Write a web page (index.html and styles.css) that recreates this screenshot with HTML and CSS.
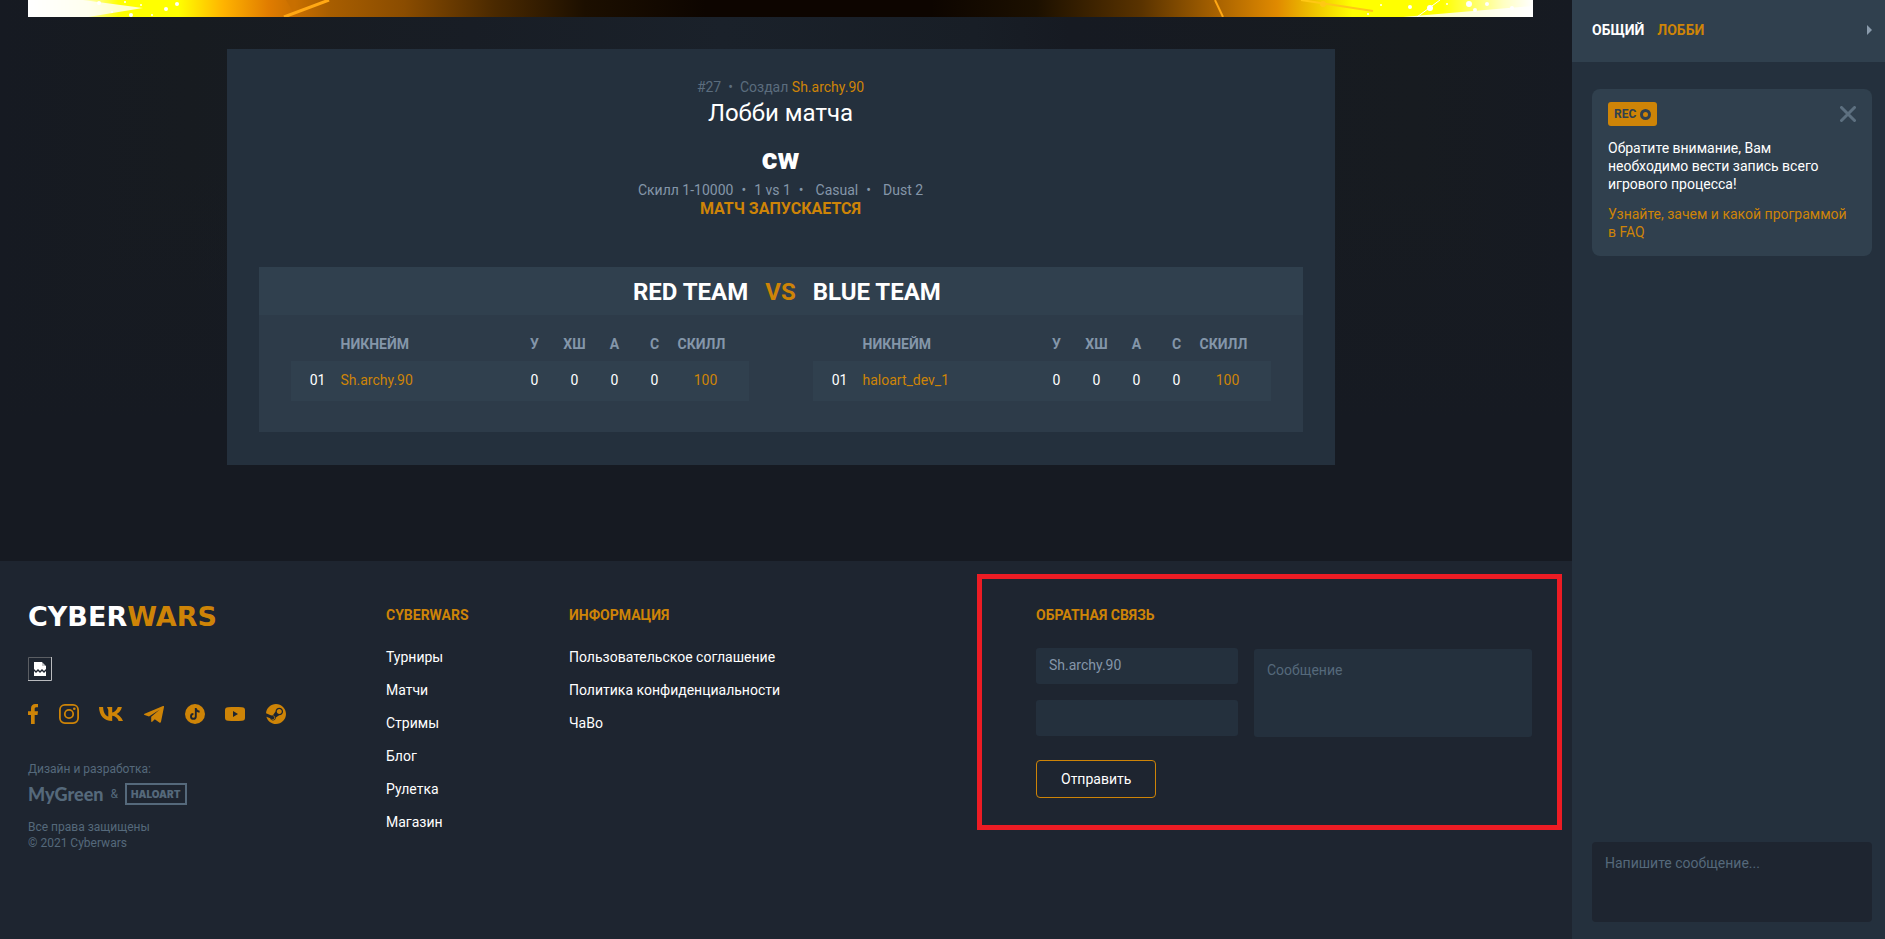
FILE: index.html
```html
<!DOCTYPE html>
<html lang="ru">
<head>
<meta charset="utf-8">
<meta name="viewport" content="width=device-width, initial-scale=1">
<title>Cyberwars</title>
<link rel="stylesheet" href="styles.css">
</head>
<body>
<div class="page">
  <div class="content">
    <main class="main">
      <div class="banner">
        <svg class="banner-left" width="400" height="17" viewBox="0 0 400 17" aria-hidden="true">
          <path d="M0 0H55L115 8L60 17H0z" fill="#fff" opacity=".8"/>
          <path d="M258 0h8v13z" fill="#c86f00"/>
          <path d="M301 0L256 17" stroke="#ffa814" stroke-width="3"/>
          <g fill="#fff"><circle cx="71" cy="3" r="2"/><circle cx="84" cy="12" r="1"/><circle cx="97" cy="2" r="1"/><circle cx="103" cy="15" r="2"/><circle cx="113" cy="5" r="1"/><circle cx="138" cy="9" r="2"/><circle cx="149" cy="4" r="2"/><circle cx="124" cy="15" r="1"/></g>
        </svg>
        <svg class="banner-right" width="400" height="17" viewBox="0 0 400 17" aria-hidden="true">
          <path d="M400 6L340 11L270 17H400z" fill="#fff" opacity=".8"/>
          <path d="M82 0L90 17" stroke="#ffa814" stroke-width="2"/>
          <path d="M168 0L240 11" stroke="#ffc814" stroke-width="2"/>
          <path d="M307 0L284 17" stroke="#fff"/>
          <circle cx="190" cy="4" r="3" fill="#ffc814"/>
          <g fill="#fff"><circle cx="248" cy="5" r="1"/><circle cx="277" cy="7" r="2"/><circle cx="297" cy="8" r="3"/><circle cx="314" cy="4" r="1"/><circle cx="336" cy="4" r="3"/><circle cx="354" cy="4" r="2"/><circle cx="342" cy="10" r="2"/><circle cx="379" cy="8" r="2"/><circle cx="235" cy="14" r="1"/></g>
        </svg>
      </div>

      <section class="lobby">
        <p class="lobby-meta"><span>#27</span><span>•</span><span>Создал <a class="accent" href="#">Sh.archy.90</a></span></p>
        <h1 class="lobby-title">Лобби матча</h1>
        <h2 class="lobby-name">cw</h2>
        <p class="lobby-info"><span>Скилл 1-10000</span><span>•</span><span>1 vs 1</span><span>•</span><span class="mode">Casual</span><span>•</span><span class="mode">Dust 2</span></p>
        <p class="lobby-status">МАТЧ ЗАПУСКАЕТСЯ</p>

        <div class="teams">
          <div class="teams-head"><span class="team-red">RED TEAM</span><span class="accent">VS</span><span>BLUE TEAM</span></div>
          <div class="teams-body">
            <table class="roster">
              <thead><tr><th class="num"></th><th class="nick">НИКНЕЙМ</th><th class="stat">У</th><th class="stat">ХШ</th><th class="stat">А</th><th class="stat">С</th><th class="skill">СКИЛЛ</th></tr></thead>
              <tbody><tr><td class="num">01</td><td class="nick"><a class="accent" href="#">Sh.archy.90</a></td><td>0</td><td>0</td><td>0</td><td>0</td><td class="skill accent">100</td></tr></tbody>
            </table>
            <table class="roster">
              <thead><tr><th class="num"></th><th class="nick">НИКНЕЙМ</th><th class="stat">У</th><th class="stat">ХШ</th><th class="stat">А</th><th class="stat">С</th><th class="skill">СКИЛЛ</th></tr></thead>
              <tbody><tr><td class="num">01</td><td class="nick"><a class="accent" href="#">haloart_dev_1</a></td><td>0</td><td>0</td><td>0</td><td>0</td><td class="skill accent">100</td></tr></tbody>
            </table>
          </div>
        </div>
      </section>
    </main>

    <footer class="footer">
      <div class="brand">
        <a class="logo" href="#">CYBER<span class="accent">WARS</span></a>
        <svg class="missing" width="24" height="24" viewBox="0 0 24 24" role="img" aria-label="Изображение">
          <path d="M.5 24V.5H24" fill="none" stroke="#5b5e63"/>
          <path d="M23.500 0V23.500H0" fill="none" stroke="#b9bbbe"/>
          <path d="M6 5h8v4h4v3l-2 2-2-2-2 2-2-2-2 2-2-2z" fill="#fff"/>
          <path d="M14 5l4 4h-4z" fill="#c4c6c8"/>
          <path d="M6 14l2 2 2-2 2 2 2-2 2 2 2-2v5H6z" fill="#fff"/>
        </svg>
        <div class="social">
          <a href="#" aria-label="Facebook"><svg width="10" height="20" viewBox="0 0 10 20"><path d="M3 20V11H0V7.300h3V4.500C3 1.600 4.700 0 7.300 0H10v3.300H8.300C7 3.300 6.700 4 6.700 5v2.300H10L9.500 11H6.700v9z"/></svg></a>
          <a href="#" aria-label="Instagram"><svg width="20" height="20" viewBox="0 0 20 20"><g fill="none" stroke="#ce8407" stroke-width="1.800"><rect x=".9" y=".9" width="18.200" height="18.200" rx="5"/><circle cx="10" cy="10" r="4.200"/></g><circle cx="15.300" cy="4.700" r="1.300"/></svg></a>
          <a href="#" aria-label="ВКонтакте"><svg width="24" height="14" viewBox="0 0 24 14"><path d="M13.100 14C4.900 14 .3 8.700 0 0h4.100c.2 6.400 3.100 9.100 5.200 9.600V3L8 0h5.200v5.500c2.300-.3 4.800-2.800 5.600-5.500h4.100c-.6 3.500-3.300 6-5.200 7.100 1.900.9 5 3.200 6.300 6.900h-4.400c-.9-2.800-3.200-5-6.400-5.300V14z"/></svg></a>
          <a href="#" aria-label="Telegram"><svg width="20" height="17" viewBox="0 0 20 17"><path d="M.6 7.700L19 .1c.7-.2 1.200.1 1 1L17 15.700c-.2 1.100-.9 1.300-1.700.8l-4.500-3.300-2.600 2.600c-.4.400-1 .2-1-.6v-4.400L15.500 3.800 5 10.400.6 9c-.8-.3-.8-.9 0-1.300z"/></svg></a>
          <a href="#" aria-label="TikTok"><svg width="20" height="20" viewBox="0 0 20 20"><circle cx="10" cy="10" r="10"/><path d="M10.800 4v8.400a2.400 2.400 0 1 1-2.400-2.400M10.800 4c.2 2.200 1.600 3.500 3.800 3.700" fill="none" stroke="#1e2530" stroke-width="1.900"/></svg></a>
          <a href="#" aria-label="YouTube"><svg width="20" height="14" viewBox="0 0 20 14"><path fill-rule="evenodd" d="M3 .3C7 0 13 0 17 .3c2 .1 3 1 3 3v7.400c0 2-1 2.900-3 3-4 .3-10 .3-14 0-2-.1-3-1-3-3V3.300c0-2 1-2.900 3-3zM8 4v6l5-3z"/></svg></a>
          <a href="#" aria-label="Steam"><svg width="20" height="20" viewBox="0 0 24 24"><path d="M11.979 0C5.678 0 .511 4.860.022 11.037l6.432 2.658c.545-.371 1.203-.59 1.912-.59.063 0 .125.004.188.006l2.861-4.142V8.910c0-2.495 2.028-4.524 4.524-4.524 2.494 0 4.524 2.031 4.524 4.527s-2.030 4.525-4.524 4.525h-.105l-4.076 2.911c0 .052.004.105.004.159 0 1.875-1.515 3.396-3.390 3.396-1.635 0-3.016-1.173-3.331-2.727L.436 15.270C1.862 20.307 6.486 24 11.979 24c6.627 0 11.999-5.373 11.999-12S18.605 0 11.979 0zM7.540 18.210l-1.473-.61c.262.543.714.999 1.314 1.250 1.297.539 2.793-.076 3.332-1.375.263-.63.264-1.319.005-1.949s-.75-1.121-1.377-1.383c-.624-.26-1.290-.249-1.878-.03l1.523.63c.956.4 1.409 1.500 1.009 2.455-.397.957-1.497 1.410-2.454 1.012H7.540zm11.415-9.303c0-1.662-1.353-3.015-3.015-3.015-1.665 0-3.015 1.353-3.015 3.015 0 1.665 1.350 3.015 3.015 3.015 1.663 0 3.015-1.350 3.015-3.015z"/></svg></a>
        </div>
        <p class="small">Дизайн и разработка:</p>
        <div class="makers"><a class="mygreen" href="#">MyGreen</a><span>&amp;</span><a class="haloart" href="#">HALOART</a></div>
        <p class="small">Все права защищены<br>© 2021 Cyberwars</p>
      </div>

      <nav class="links" aria-label="Cyberwars">
        <h3>CYBERWARS</h3>
        <a href="#">Турниры</a><a href="#">Матчи</a><a href="#">Стримы</a><a href="#">Блог</a><a href="#">Рулетка</a><a href="#">Магазин</a>
      </nav>
      <nav class="links" aria-label="Информация">
        <h3>ИНФОРМАЦИЯ</h3>
        <a href="#">Пользовательское соглашение</a><a href="#">Политика конфиденциальности</a><a href="#">ЧаВо</a>
      </nav>

      <form class="feedback">
        <h3>ОБРАТНАЯ СВЯЗЬ</h3>
        <div class="fields">
          <div class="field-stack">
            <input class="field" type="text" aria-label="Имя" value="Sh.archy.90">
            <input class="field" type="email" aria-label="Эл. почта">
          </div>
          <textarea class="field message" aria-label="Сообщение" placeholder="Сообщение"></textarea>
        </div>
        <button class="send" type="button">Отправить</button>
      </form>
    </footer>
  </div>

  <aside class="chat">
    <header class="chat-head">
      <button class="tab" type="button">ОБЩИЙ</button>
      <button class="tab accent" type="button">ЛОББИ</button>
      <button class="collapse" type="button" aria-label="Свернуть"><svg width="5" height="10" viewBox="0 0 5 10"><path d="M0 0l5 5-5 5z" fill="#8a9bac"/></svg></button>
    </header>
    <div class="notice">
      <div class="notice-top">
        <span class="rec">REC <svg width="11" height="11" viewBox="0 0 11 11" aria-hidden="true"><circle cx="5.500" cy="5.500" r="4" fill="none" stroke="#30404e" stroke-width="3"/></svg></span>
        <button class="close" type="button" aria-label="Закрыть"><svg width="16" height="16" viewBox="0 0 16 16"><path d="M1.500 1.500l13 13m0-13l-13 13" stroke="#5d7080" stroke-width="3" stroke-linecap="round"/></svg></button>
      </div>
      <p>Обратите внимание, Вам необходимо вести запись всего игрового процесса!</p>
      <a class="accent" href="#">Узнайте, зачем и какой программой в FAQ</a>
    </div>
    <textarea class="chat-input" aria-label="Напишите сообщение" placeholder="Напишите сообщение..."></textarea>
  </aside>
</div>
</body>
</html>
```

FILE: styles.css
```css
* { box-sizing: border-box; }

body {
  margin: 0;
  font: 14px/18px Roboto, "Liberation Sans", sans-serif;
  color: #fff;
  background: #161a22;
}

p, h1, h2, h3 { margin: 0; }
a { color: inherit; text-decoration: none; }
button { padding: 0; border: 0; background: none; color: inherit; font: inherit; cursor: pointer; }
input, textarea { border: 0; outline: 0; font: inherit; resize: none; }
svg { display: block; }
.accent { color: #ce8407; }

.page { display: flex; min-height: 100vh; }
.content { flex: 1; min-width: 0; display: flex; flex-direction: column; }

.main {
  padding: 0 39px 96px 28px;
  background:
    linear-gradient(180deg, transparent 0%, transparent 30%, #161a22 75%),
    linear-gradient(90deg, #161a22 0%, #171b20 12%, #181d25 30%, #1a212a 46%, #181e26 62%, #161a22 68%, #171b20 90%, #161a22 100%);
}

.banner {
  display: flex;
  justify-content: space-between;
  margin-bottom: 32px;
  background: linear-gradient(90deg, #fff 0%, #ffffb0 4%, #ffff00 6%, #ffff00 10%, #ffb300 13%, #e07c00 16%, #a85e00 20%, #8a4c00 25%, #4a2900 31%, #1c0f00 37%, #0d0500 45%, #0d0500 60%, #1c1000 67%, #5a3300 74%, #a86200 79%, #e08a00 83%, #ffff00 88%, #ffff00 94%, #ffffc0 98%, #fff 100%);
}

.lobby {
  max-width: 1108px;
  margin: 0 auto;
  padding: 28px 32px 33px;
  background: #24303d;
  text-align: center;
}
.lobby-meta, .lobby-info { display: flex; justify-content: center; gap: 8px; line-height: 20px; }
.lobby-meta { gap: 7px; color: #5b6d7e; }
.lobby-title { margin-top: 2px; font-size: 24px; line-height: 28px; font-weight: 400; }
.lobby-name { margin: 16px 0 5px; font-size: 30px; line-height: 32px; font-weight: 900; }
.lobby-info { color: #8496a9; }
.mode { margin-left: 4px; }
.lobby-status { color: #ce8407; font-size: 16px; line-height: 18px; font-weight: 700; }

.teams { margin-top: 49px; background: #2d3b49; }
.teams-head {
  display: grid;
  grid-template-columns: 1fr auto 1fr;
  gap: 17px;
  padding-top: 2px;
  background: #30404e;
  font-size: 24px;
  line-height: 46px;
  font-weight: 700;
  text-align: left;
}
.team-red { text-align: right; }
.teams-body { display: grid; grid-template-columns: 1fr 1fr; gap: 64px; padding: 11px 32px 31px; }

.roster { width: 100%; table-layout: fixed; border-collapse: collapse; }
.roster th { height: 35px; padding: 0; color: #8496a9; font-weight: 700; }
.roster td { height: 40px; padding: 0 0 2px; background: #30404e; }
.roster .num { width: 50px; padding-left: 4px; }
.roster .nick { text-align: left; }
.roster .stat { width: 40px; }
.roster .skill { width: 74px; padding-right: 12px; }
.roster th.skill { padding-right: 20px; }

.footer {
  flex: 1;
  display: grid;
  grid-template-columns: 358px 183px 1fr 585px;
  padding: 13px 10px 32px 28px;
  background: #1e2530;
}
.brand { padding-top: 32px; }
.logo { display: block; font: bold 27px/22px "DejaVu Sans", sans-serif; }
.missing { margin-top: 29px; }
.social { display: flex; justify-content: space-between; align-items: center; width: 258px; margin: 23px 0 37px; }
.social svg { fill: #ce8407; }
.small { color: #55697b; font-size: 12px; line-height: 16px; }
.makers { display: flex; align-items: center; gap: 7px; margin: 6px 0 14px; color: #55697b; font-size: 12px; }
.mygreen { font: 900 18px/22px Lato, sans-serif; }
.haloart { padding: 0 4px; border: 2px solid #55697b; font: 900 10px/18px Inter, sans-serif; }

.links { display: flex; flex-direction: column; gap: 15px; padding-top: 32px; }
.links h3, .feedback h3 { font-size: 14px; line-height: 18px; font-weight: 700; color: #ce8407; }
.links h3 { margin-bottom: 9px; }

.feedback { align-self: start; padding: 27px 25px 27px 54px; border: 5px solid #ed1c24; }
.fields { display: flex; gap: 16px; margin: 24px 0 23px; }
.field-stack { flex: 0 0 202px; min-width: 0; display: flex; flex-direction: column; gap: 16px; }
.field { min-width: 0; padding: 0 13px; border-radius: 3px; background: #24303d; color: #8496a9; }
.field-stack .field { height: 36px; padding-bottom: 2px; }
.message { flex: 1; margin-top: 1px; padding: 12px 13px; }
.fields .message { height: 88px; }
.field::placeholder, .chat-input::placeholder { color: #55697b; opacity: 1; }
.send { padding: 9px 24px; border: 1px solid #ce8407; border-radius: 4px; }

.chat { flex: 0 0 313px; display: flex; flex-direction: column; background: #24303d; }
.chat-head { display: flex; align-items: center; gap: 13px; height: 62px; padding: 0 13px 3px 20px; background: #30404e; }
.tab { font-weight: 700; }
.collapse { margin-left: auto; }
.notice { margin: 27px 13px auto 20px; padding: 13px 16px 15px; border-radius: 8px; background: #30404e; }
.notice-top { display: flex; justify-content: space-between; align-items: center; margin-bottom: 13px; }
.rec { display: flex; align-items: center; gap: 4px; padding: 0 6px; border-radius: 3px; background: #ce8407; color: #30404e; font-size: 12px; line-height: 24px; font-weight: 700; }
.notice p { margin-bottom: 12px; padding-right: 24px; }
.chat-input { height: 80px; margin: 0 13px 17px 20px; padding: 12px 13px; border-radius: 4px; background: #1e2530; color: #fff; }
```
